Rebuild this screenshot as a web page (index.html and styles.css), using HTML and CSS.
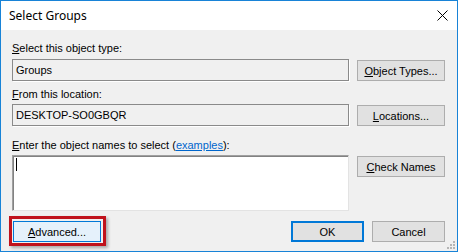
FILE: index.html
```html
<html>
  <head>
    <meta name="viewport" content="width=device-width,initial-scale=1">
    <title>Select Groups</title>
    <link rel="stylesheet" href="styles.css">
  </head>
  <body>
    <div class="window">
        <div class="titlebar">
            <span class="title">Select Groups</span>
            <svg class="close" width="11" height="11" viewBox="0 0 11 11">
                <path d="M0.5 0.5 L10.5 10.5 M10.5 0.5 L0.5 10.5" stroke="#000" stroke-width="1" fill="none"/>
            </svg>
        </div>

        <div class="content">
            <div class="label first"><u>S</u>elect this object type:</div>
            <div class="row">
                <div class="field">Groups</div>
                <button class="btn"><u>O</u>bject Types...</button>
            </div>

            <div class="label second"><u>F</u>rom this location:</div>
            <div class="row">
                <div class="field">DESKTOP-SO0GBQR</div>
                <button class="btn"><u>L</u>ocations...</button>
            </div>

            <div class="label third"><u>E</u>nter the object names to select (<a class="link">examples</a>):</div>
            <div class="row">
                <div class="field editor"><span class="caret"></span></div>
                <button class="btn"><u>C</u>heck Names</button>
            </div>
        </div>

        <div class="footer">
            <div class="highlight">
                <button class="btn advanced"><u>A</u>dvanced...</button>
            </div>
            <div class="actions">
                <button class="btn small default">OK</button>
                <button class="btn small">Cancel</button>
            </div>
        </div>

        <svg class="grip" width="11" height="9" viewBox="0 0 11 9">
            <rect x="8" y="0" width="2" height="2" fill="#b5b5b5"/>
            <rect x="5" y="3" width="2" height="2" fill="#b5b5b5"/>
            <rect x="8" y="3" width="2" height="2" fill="#b5b5b5"/>
            <rect x="2" y="6" width="2" height="2" fill="#b5b5b5"/>
            <rect x="5" y="6" width="2" height="2" fill="#b5b5b5"/>
            <rect x="8" y="6" width="2" height="2" fill="#b5b5b5"/>
        </svg>
    </div>
  </body>
</html>
```

FILE: styles.css
```css
:root {
    --face: #f0f0f0;
    --frame: #1883d7;
    --btn: #e1e1e1;
    --btn-border: #adadad;
    --accent: #0078d7;
    --mark: #c0121c;
}

* {
    box-sizing: border-box;
}

body {
    margin: 0;
    padding: 0;
    background-color: var(--face);
    color: #000;
    font-family: "Liberation Sans", Arial, sans-serif;
    font-size: 11px;
}

.window {
    position: relative;
    width: 458px;
    height: 252px;
    border: 1px solid var(--frame);
    background-color: var(--face);
}

.titlebar {
    display: flex;
    align-items: center;
    height: 29px;
    padding: 0 9px 0 8px;
    background-color: #fff;
    font-family: "Noto Sans", "Liberation Sans", sans-serif;
    font-size: 12px;
}

.title {
    flex: 1;
}

.content {
    padding: 12px 12px 0 11px;
}

.label {
    height: 13px;
    line-height: 13px;
    white-space: nowrap;
}

.second {
    margin-top: 7px;
}

.third {
    margin-top: 13px;
}

.link {
    color: #0066cc;
    text-decoration: underline;
}

.row {
    display: flex;
    align-items: flex-start;
    gap: 8px;
    margin-top: 4px;
}

.second + .row, .third + .row {
    margin-top: 3px;
}

.field {
    width: 337px;
    height: 22px;
    line-height: 20px;
    padding: 0 3px;
    border: 1px solid #8a8a8a;
    box-shadow: 1px 1px 0 #fff;
    white-space: nowrap;
}

.editor {
    height: 56px;
    padding: 2px 3px;
    background-color: #fff;
    border-color: #a0a0a0 #e3e3e3 #e3e3e3 #a0a0a0;
    box-shadow: inset 1px 1px 0 #828282;
}

.caret {
    display: block;
    width: 1px;
    height: 13px;
    background-color: #000;
}

.btn {
    width: 88px;
    height: 21px;
    padding: 0;
    margin: 1px 0 0 0;
    border: 1px solid var(--btn-border);
    background-color: var(--btn);
    color: #000;
    font-family: inherit;
    font-size: 11px;
}

.footer {
    display: flex;
    align-items: center;
    margin-top: 9px;
    padding: 0 12px;
}

.highlight {
    position: relative;
}

/* red annotation frame around the Advanced button */
.highlight::after {
    content: "";
    position: absolute;
    top: -4px;
    left: -4px;
    right: -5px;
    bottom: -4px;
    border: 3px solid var(--mark);
    box-shadow: 2px 2px 3px rgba(0, 0, 0, 0.3);
}

.advanced {
    background-color: #e5f1fb;
    border-color: var(--accent);
}

.actions {
    display: flex;
    gap: 8px;
    margin-left: auto;
}

.small {
    width: 73px;
}

.default {
    border: 2px solid var(--accent);
}

.grip {
    position: absolute;
    right: 1px;
    bottom: 1px;
}
```
